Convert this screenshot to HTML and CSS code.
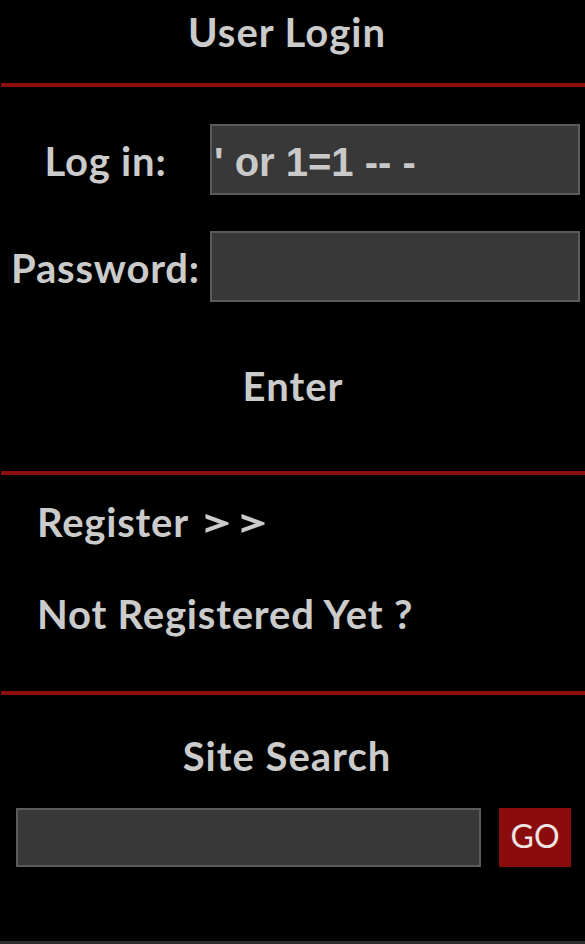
FILE: index.html
```html
<!DOCTYPE html>
<html lang="en">
<head>
<meta charset="utf-8">
<title>User Login</title>
<link rel="stylesheet" href="styles.css">
</head>
<body>
<div class="panel">
  <header class="sec sec-head">
    <h1 class="title">User Login</h1>
  </header>
  <form class="sec sec-form" onsubmit="return false">
    <div class="grid">
      <label class="lbl" for="login">Log in:</label>
      <input class="field" id="login" type="text" value="' or 1=1 -- -">
      <label class="lbl" for="pass">Password:</label>
      <input class="field" id="pass" type="password">
    </div>
    <button class="enter" type="submit">Enter</button>
  </form>
  <nav class="sec sec-links">
    <a class="link" href="#">Register<span class="arrow">&gt;</span><span class="arrow">&gt;</span></a>
    <a class="link link-2" href="#">Not Registered Yet ?</a>
  </nav>
  <section class="sec sec-search">
    <h2 class="title">Site Search</h2>
    <div class="search-row">
      <input class="field search" type="text">
      <button class="go" type="button">GO</button>
    </div>
  </section>
</div>
</body>
</html>
```

FILE: styles.css
```css
html, body {
  margin: 0;
  padding: 0;
  background: #000;
}
body {
  width: 585px;
  height: 944px;
  overflow: hidden;
  font-family: Lato, "Open Sans", sans-serif;
  color: #cbcbcb;
}
.panel {
  display: flex;
  flex-direction: column;
  height: 941px;
  border-bottom: 3px solid #2e2e2e;
}
.sec {
  margin-left: 1px;
  border-bottom: 4px solid #8c0f0f;
}
.title {
  margin: 0;
  padding-right: 12px;
  font-size: 40px;
  line-height: 48px;
  font-weight: 700;
  letter-spacing: 1px;
  text-align: center;
}
.sec-head {
  height: 75px;
  padding-top: 8px;
}
.sec-form {
  padding: 37px 0 61px;
  display: flex;
  flex-direction: column;
  align-items: center;
}
.grid {
  display: grid;
  grid-template-columns: 209px 370px;
  row-gap: 36px;
  align-items: center;
  width: 584px;
}
.lbl {
  font-size: 40px;
  line-height: 48px;
  font-weight: 700;
  letter-spacing: 0.8px;
  text-align: center;
  padding-top: 2px;
}
.field {
  box-sizing: border-box;
  height: 71px;
  width: 370px;
  margin: 0;
  background: #383838;
  border: 2px solid #5b5b5b;
  border-radius: 0;
  outline: none;
  color: #c9c9c9;
  font-family: "Liberation Sans", Arial, sans-serif;
  font-weight: 700;
  font-size: 40px;
  padding: 6px 2px 0;
}
.enter {
  margin-top: 60px;
  background: none;
  border: 0;
  padding: 0;
  color: #cbcbcb;
  font-family: Lato, "Open Sans", sans-serif;
  font-size: 40px;
  line-height: 48px;
  font-weight: 700;
  letter-spacing: 1px;
}
.sec-links {
  display: flex;
  flex-direction: column;
  align-items: flex-start;
  padding: 23px 0 53px 36px;
}
.link {
  color: #cbcbcb;
  text-decoration: none;
  font-size: 40px;
  line-height: 48px;
  font-weight: 700;
  letter-spacing: 0.8px;
}
.arrow {
  display: inline-block;
  width: 26px;
  margin-left: 10px;
  text-align: center;
  letter-spacing: 0;
  transform: scaleX(1.45);
}
.arrow:first-child {
  margin-left: 14px;
}
.link-2 {
  margin-top: 44px;
}
.sec-search {
  border-bottom: 0;
  padding-top: 37px;
  flex: 1;
}
.search-row {
  display: flex;
  align-items: center;
  margin-top: 28px;
  padding-left: 15px;
  gap: 18px;
}
.search {
  width: 465px;
  height: 59px;
}
.go {
  width: 72px;
  height: 59px;
  background: #8b0c0c;
  border: 0;
  padding: 0 0 5px;
  color: #efe3e3;
  font-family: Lato, "Open Sans", sans-serif;
  font-size: 32px;
  font-weight: 400;
}
```
